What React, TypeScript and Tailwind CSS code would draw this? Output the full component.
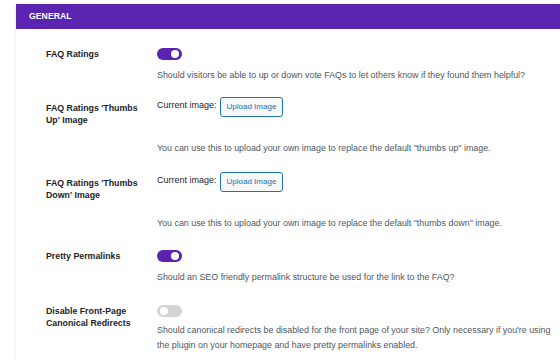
import React from "react";

const font = { fontFamily: '"Liberation Sans", Arial, sans-serif' };

const Toggle = ({ on }: { on: boolean }) => (
  <div
    className={`relative h-[12px] w-[25px] rounded-full ${on ? "bg-[#5b24b0]" : "bg-[#d4d4d4]"}`}
  >
    <div
      className={`absolute top-[2px] h-[8px] w-[8px] rounded-full bg-white ${on ? "right-[3px]" : "left-[3px]"}`}
    />
  </div>
);

const UploadRow = ({ label, desc, mt }: { label: React.ReactNode; desc: string; mt: string }) => (
  <div className={`flex ${mt}`}>
    <div className="w-[111px] shrink-0 pt-[5px] text-[8.8px] font-bold leading-[12px] text-[#1d2327]">
      {label}
    </div>
    <div className="flex flex-col">
      <div className="flex items-start gap-[3px]">
        <span className="pt-[2px] text-[9px] text-[#1d2327]">Current image:</span>
        <button className="h-[20px] rounded-[3px] border border-[#2271b1] bg-[#f6f7f7] px-[6px] text-[8px] leading-[18px] text-[#2271b1]">
          Upload Image
        </button>
      </div>
      <p className="mt-[24px] text-[8.9px] leading-[14px] text-[#50575e]">{desc}</p>
    </div>
  </div>
);

export default function App() {
  return (
    <div className="h-[360px] w-[560px] overflow-hidden bg-white" style={font}>
      <div className="ml-[16px] h-full shadow-[-1px_0_3px_rgba(0,0,0,0.08)]">
        <div className="mt-[4px] flex h-[25px] items-center bg-[#5b24b0] pl-[13px] text-[8.6px] font-bold tracking-[0.1px] text-white">
          GENERAL
        </div>

        <div className="pl-[30px]">
          {/* FAQ Ratings */}
          <div className="flex pt-[19px]">
            <div className="w-[111px] shrink-0 text-[8.8px] font-bold leading-[12px] text-[#1d2327]">
              FAQ Ratings
            </div>
            <div className="flex flex-col">
              <Toggle on />
              <p className="mt-[8px] text-[8.9px] leading-[14px] text-[#50575e]">
                Should visitors be able to up or down vote FAQs to let others know if they found them helpful?
              </p>
            </div>
          </div>

          <UploadRow
            mt="mt-[15px]"
            label={
              <>
                FAQ Ratings 'Thumbs
                <br />
                Up' Image
              </>
            }
            desc={'You can use this to upload your own image to replace the default "thumbs up" image.'}
          />

          <UploadRow
            mt="mt-[17px]"
            label={
              <>
                FAQ Ratings 'Thumbs
                <br />
                Down' Image
              </>
            }
            desc={'You can use this to upload your own image to replace the default "thumbs down" image.'}
          />

          {/* Pretty Permalinks */}
          <div className="mt-[20px] flex">
            <div className="w-[111px] shrink-0 text-[8.8px] font-bold leading-[12px] text-[#1d2327]">
              Pretty Permalinks
            </div>
            <div className="flex flex-col">
              <Toggle on />
              <p className="mt-[8px] text-[8.9px] leading-[14px] text-[#50575e]">
                Should an SEO friendly permalink structure be used for the link to the FAQ?
              </p>
            </div>
          </div>

          {/* Canonical redirects */}
          <div className="mt-[21px] flex">
            <div className="w-[111px] shrink-0 text-[8.8px] font-bold leading-[12px] text-[#1d2327]">
              Disable Front-Page
              <br />
              Canonical Redirects
            </div>
            <div className="flex flex-col">
              <Toggle on={false} />
              <p className="mt-[6px] whitespace-nowrap text-[8.9px] leading-[15px] text-[#50575e]">
                Should canonical redirects be disabled for the front page of your site? Only necessary if you're using
                <br />
                the plugin on your homepage and have pretty permalinks enabled.
              </p>
            </div>
          </div>
        </div>
      </div>
    </div>
  );
}
